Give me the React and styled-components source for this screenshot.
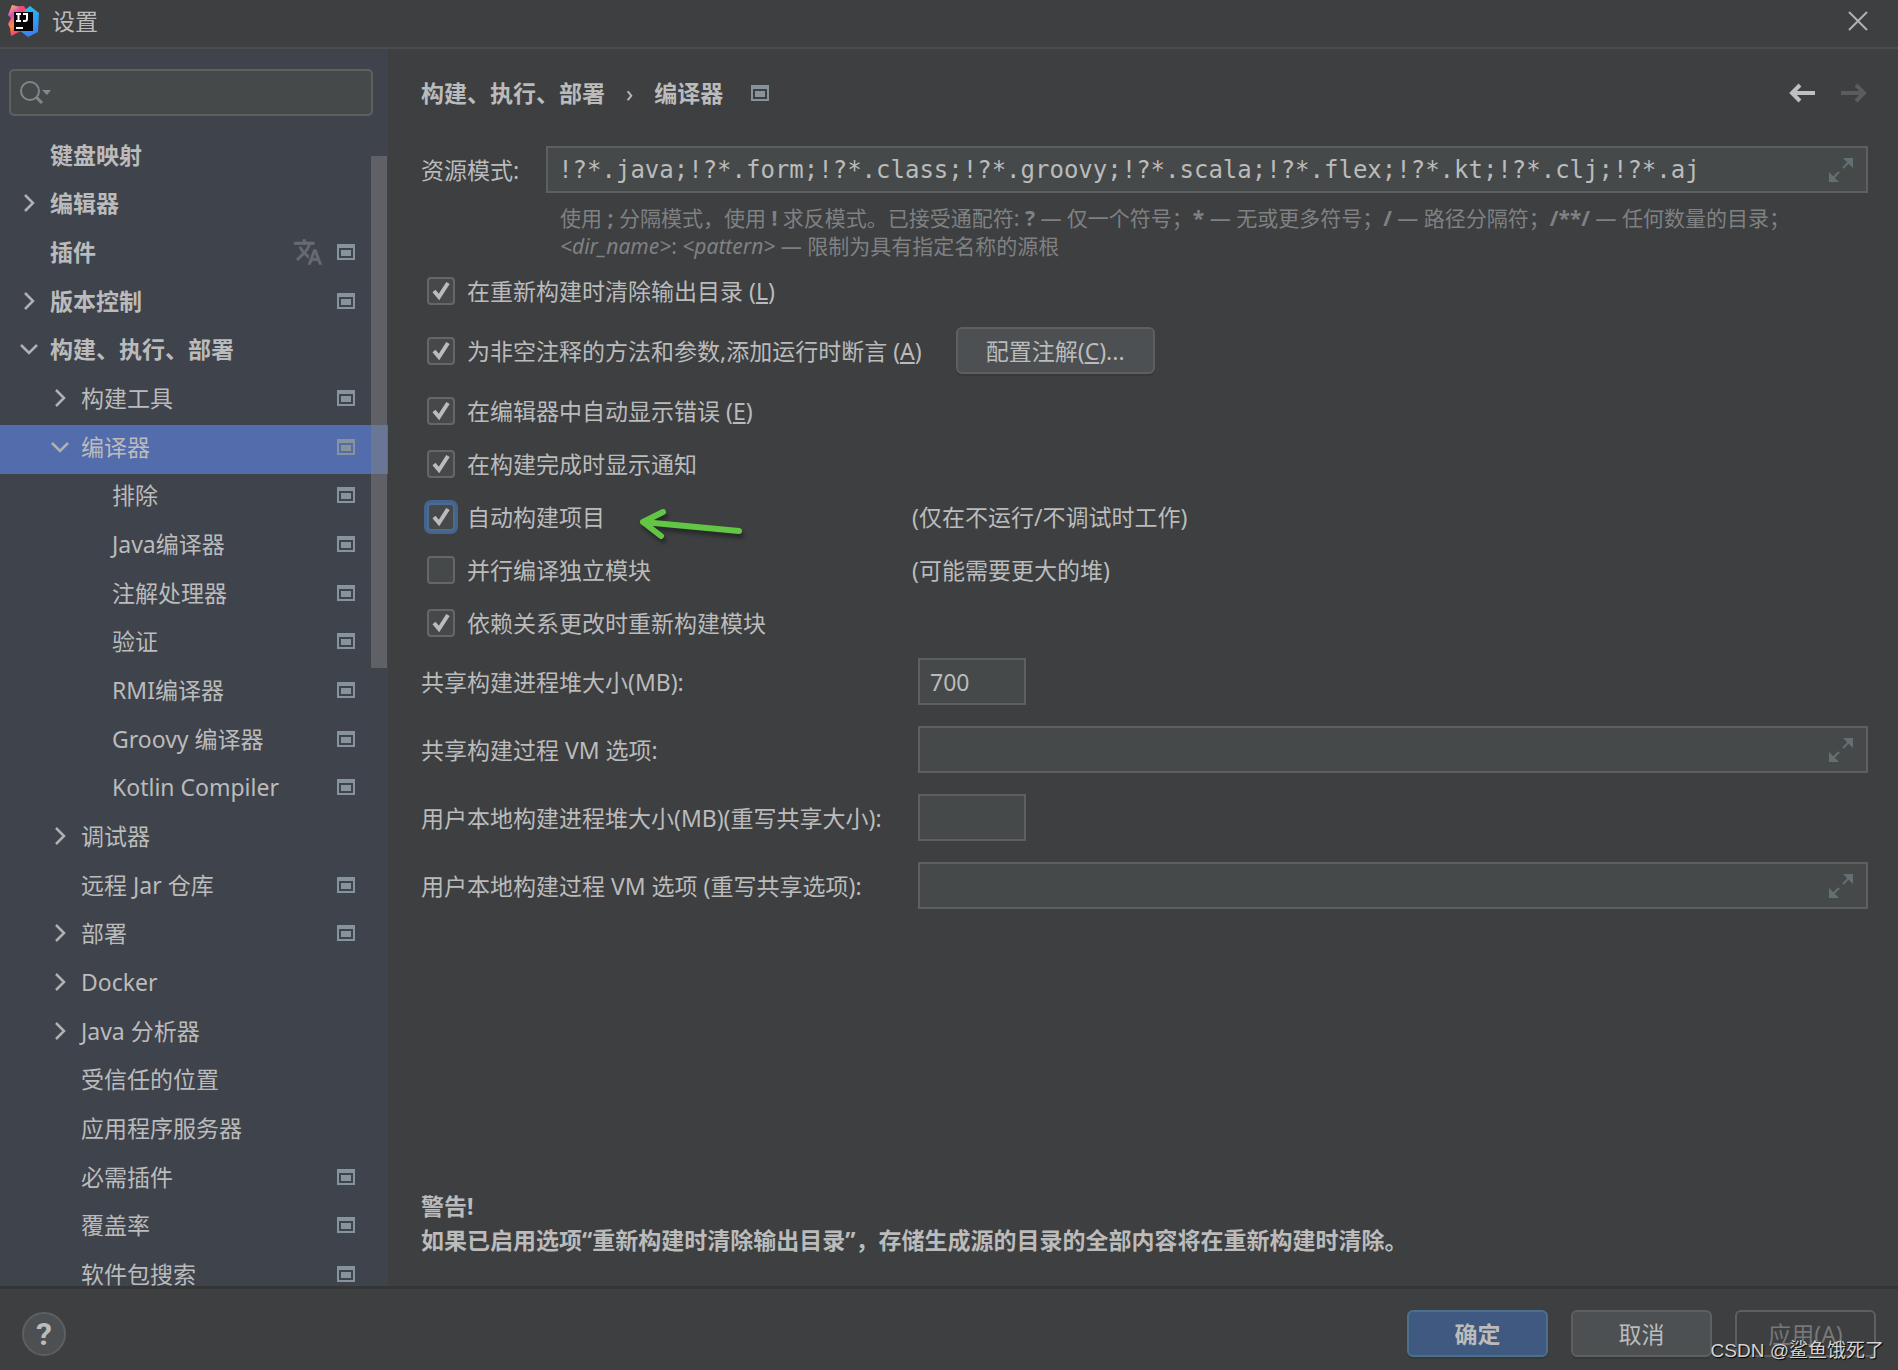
import React from "react";
import styled, { createGlobalStyle, css } from "styled-components";

const GlobalStyle = createGlobalStyle`
  * {
    box-sizing: border-box;
  }
  body {
    margin: 0;
    background: #3d3f41;
  }
  body, button, input {
    color: #bbbbbb;
    font-family: "Noto Sans", "Noto Sans CJK SC", sans-serif;
    font-size: 23px;
    line-height: 32px;
  }
`;

const Window = styled.div`
  display: flex;
  flex-direction: column;
  height: 100vh;
  overflow: hidden;
  background: #3d3f41;
`;

const TitleBar = styled.header`
  display: flex;
  flex: none;
  align-items: center;
  height: 49px;
  padding: 0 30px 6px 7px;
  border-bottom: 2px solid #4a4c4e;
`;

const WindowTitle = styled.h1`
  flex: 1;
  margin: 0 0 0 12px;
  font-size: 23px;
  font-weight: 400;
`;

const IconButton = styled.button`
  display: flex;
  padding: 0;
  border: 0;
  background: none;
`;

const Body = styled.div`
  display: flex;
  flex: 1;
  min-height: 0;
`;

const Sidebar = styled.aside`
  display: flex;
  flex: none;
  flex-direction: column;
  width: 388px;
  background: #3f434c;
`;

const SearchBox = styled.label`
  display: flex;
  flex: none;
  align-items: center;
  height: 47px;
  margin: 20px 15px 17px 9px;
  padding-left: 8px;
  border: 2px solid #5e6060;
  border-radius: 5px;
  background: #454949;
`;

const SearchInput = styled.input`
  flex: 1;
  min-width: 0;
  border: 0;
  outline: 0;
  background: none;
`;

const TreeArea = styled.nav`
  position: relative;
  flex: 1;
  min-height: 0;
  overflow: hidden;
`;

const TreeList = styled.ul`
  display: grid;
  grid-auto-rows: 1fr;
  height: 1168px;
  margin: 0;
  padding: 0;
  list-style: none;
`;

const TreeRow = styled.li`
  display: flex;
  align-items: center;
  padding: 0 33px 5px ${({ $level }) => 20 + $level * 31}px;
  font-weight: ${({ $level }) => ($level === 0 ? 700 : 400)};
  background: ${({ $selected }) => ($selected ? "#536cab" : "transparent")};
`;

const Arrow = styled.span`
  display: flex;
  width: 30px;
`;

const TreeLabel = styled.span`
  flex: 1;
  white-space: nowrap;
`;

const RowIcons = styled.span`
  display: flex;
  align-items: center;
  gap: 14px;
`;

// floats over the tree, so the selected row shows through it
const ScrollThumb = styled.div`
  position: absolute;
  top: 23px;
  right: 1px;
  width: 16px;
  height: 512px;
  background: rgba(128, 128, 128, 0.5);
`;

const Content = styled.main`
  display: flex;
  flex: 1;
  flex-direction: column;
  min-width: 0;
  padding: 27px 30px 29px 33px;
`;

const Crumbs = styled.div`
  display: flex;
  align-items: center;
  height: 34px;
  font-weight: 700;
`;

const CrumbSeparator = styled.span`
  margin: 0 21px;
  font-weight: 400;
`;

const CrumbIcon = styled.span`
  display: flex;
  flex: 1;
  margin-left: 28px;
`;

const History = styled.div`
  display: flex;
  gap: 24px;
`;

const PatternRow = styled.div`
  display: flex;
  align-items: center;
  gap: 27px;
  margin-top: 36px;
`;

const Field = styled.div`
  display: flex;
  flex: ${({ $short }) => ($short ? "none" : 1)};
  align-items: center;
  width: ${({ $short }) => ($short ? "108px" : "auto")};
  height: 47px;
  padding: 0 12px 0 10px;
  border: 2px solid #5e6060;
  background: #454949;
`;

const FieldInput = styled.input`
  flex: 1;
  min-width: 0;
  padding: 0;
  border: 0;
  outline: 0;
  background: none;
  ${({ $mono }) => $mono && css`
    font-family: "DejaVu Sans Mono", monospace;
    font-size: 24px;
  `}
`;

const Hint = styled.p`
  margin: 11px 0 0 139px;
  color: #808182;
  font-size: 21px;
  line-height: 28px;
`;

const Options = styled.div`
  display: flex;
  flex-direction: column;
  margin-top: 4px;
`;

const OptionRow = styled.div`
  display: flex;
  align-items: center;
  height: ${({ $tall }) => ($tall ? "67px" : "53px")};
`;

const OptionMain = styled.div`
  display: flex;
  align-items: center;
  width: 491px;
`;

const CheckLabel = styled.label`
  display: flex;
  align-items: center;
  gap: 12px;
  padding-left: 6px;
`;

const Checkbox = styled.input`
  width: 28px;
  height: 28px;
  margin: 0;
  appearance: none;
  border: 2px solid #646768;
  border-radius: 4px;
  background: #454949;
  ${({ $focused }) => $focused && css`
    border-color: #4c6a92;
    box-shadow: 0 0 0 3px #45638f;
  `}
  &:checked {
    background: #454949 url("data:image/svg+xml,%3Csvg xmlns='http://www.w3.org/2000/svg' viewBox='0 0 24 24'%3E%3Cpath d='M5 12l5 6L19 4' fill='none' stroke='%23bbbbbb' stroke-width='4'/%3E%3C/svg%3E") center / 24px no-repeat;
  }
`;

const Button = styled.button`
  height: 47px;
  min-width: 141px;
  padding: 0 26px;
  border: 2px solid ${({ $primary }) => ($primary ? "#4c708c" : "#5e6060")};
  border-radius: 6px;
  background: ${({ $primary }) => ($primary ? "#3f5980" : "#4c5052")};
  box-shadow: 0 2px 1px rgba(0, 0, 0, 0.12);
  font-weight: ${({ $primary }) => ($primary ? 700 : 400)};
  &:disabled {
    background: none;
    box-shadow: none;
    color: #777777;
  }
`;

const ConfigureButton = styled(Button)`
  min-width: 199px;
  margin-left: 34px;
`;

const GreenArrow = styled.svg`
  margin: 14px 0 0 33px;
  filter: drop-shadow(2px 4px 2px rgba(0, 0, 0, 0.4));
`;

const Form = styled.div`
  display: grid;
  grid-template-columns: 472px 1fr;
  gap: 21px 25px;
  align-items: center;
  margin-top: 9px;
`;

const Warning = styled.p`
  margin: auto 0 0;
  font-weight: 700;
  line-height: 34px;
`;

const Footer = styled.footer`
  position: relative;
  display: flex;
  flex: none;
  align-items: center;
  gap: 23px;
  height: 84px;
  padding: 8px 22px 0;
  border-top: 3px solid #333536;
`;

const HelpButton = styled.button`
  width: 44px;
  height: 44px;
  margin-right: auto;
  padding: 0;
  border: 2px solid #5e6060;
  border-radius: 50%;
  background: #4c5052;
  font-family: Roboto, sans-serif;
  font-size: 32px;
  font-weight: 700;
`;

const Watermark = styled.span`
  position: absolute;
  right: 14px;
  bottom: 3px;
  color: #d4d4d4;
  font-family: "Liberation Sans", "Noto Sans CJK SC", sans-serif;
  font-size: 19px;
  text-shadow: 1px 1px 1px #000000;
`;

const Logo = () => (
  <svg width="33" height="33" viewBox="0 0 33 33">
    <defs>
      <linearGradient id="warm" x1="0" y1="0" x2="0.4" y2="1">
        <stop offset="0" stopColor="#ffd84a" />
        <stop offset="0.35" stopColor="#d848c0" />
        <stop offset="0.65" stopColor="#ff8a3a" />
        <stop offset="1" stopColor="#ff2d7a" />
      </linearGradient>
      <linearGradient id="cool" x1="0" y1="0" x2="0.3" y2="1">
        <stop offset="0" stopColor="#20c8f0" />
        <stop offset="1" stopColor="#3a82f4" />
      </linearGradient>
    </defs>
    <path d="M5 1L14 3 20 12 16 26 4 32 3 24 1 20 4 14 1 11z" fill="url(#warm)" />
    <path d="M12 2L17 2 21 9 12 10z" fill="#f5476e" />
    <path d="M18 6L23 2 32 9 31 28 21 33 12 26z" fill="url(#cool)" />
    <path d="M7 8H26V27H7z" fill="#080508" />
    <path d="M9 10h5M11.500 10v7M9 17h5M16 10h4v5q0 2-2 2h-2M9 24h7" fill="none" stroke="#ffffff" strokeWidth="2" />
  </svg>
);

const ProjectIcon = () => (
  <svg width="18" height="16" viewBox="0 0 18 16">
    <path d="M0 0H18V16H0zM2 4V14H16V4z" fill="#87939a" fillRule="evenodd" />
    <path d="M4 6H14V12H4z" fill="#87939a" />
  </svg>
);

const TranslateIcon = () => (
  <svg width="30" height="30" viewBox="0 0 24 24" fill="#666a71" stroke="#666a71" strokeWidth="0.5">
    <path d="M12.870 15.070l-2.540-2.510.030-.030A17.520 17.520 0 0014.070 6H17V4h-7V2H8v2H1v2h11.170C11.500 7.920 10.440 9.750 9 11.350 8.070 10.320 7.300 9.190 6.690 8h-2c.730 1.630 1.730 3.170 2.980 4.560l-5.090 5.020L4 19l5-5 3.110 3.110.760-2.040zM18.500 10h-2L12 22h2l1.120-3h4.750L21 22h2l-4.500-12zm-2.620 7l1.620-4.330L19.120 17h-3.240z" />
  </svg>
);

const Chevron = ({ open }) => (
  <svg width="18" height="18" viewBox="0 0 18 18" fill="none" stroke="#afb1b3" strokeWidth="2.500">
    <path d={open ? "M1 5l8 8 8-8" : "M5 1l8 8-8 8"} />
  </svg>
);

const SearchIcon = () => (
  <svg width="34" height="26" viewBox="0 0 34 26" fill="none" stroke="#7f868c" strokeWidth="2">
    <circle cx="11" cy="11" r="9" />
    <path d="M17 17l6 6" strokeWidth="3" />
    <path d="M23 10h9l-4 5z" fill="#7f8b91" stroke="none" />
  </svg>
);

const CloseIcon = () => (
  <svg width="20" height="20" viewBox="0 0 20 20" stroke="#afb1b3" strokeWidth="2">
    <path d="M1 1l18 18M19 1L1 19" />
  </svg>
);

const HistoryArrow = ({ forward }) => (
  <svg width="28" height="20" viewBox="0 0 28 20" fill="none" stroke={forward ? "#5a5c5d" : "#bfbfbf"} strokeWidth="4">
    <path d={forward ? "M1 10h23M16 2l8 8-8 8" : "M27 10H4M12 2l-8 8 8 8"} />
  </svg>
);

const ExpandIcon = () => (
  <svg width="26" height="26" viewBox="0 0 26 26" fill="#646f74">
    <path d="M15 1h10v10zM1 15v10h10z" />
    <path d="M21 5l-6 6M5 21l6-6" stroke="#646f74" strokeWidth="2" />
  </svg>
);

const tree = [
  { label: "键盘映射", level: 0 },
  { label: "编辑器", level: 0, arrow: "closed" },
  { label: "插件", level: 0, translate: true, project: true },
  { label: "版本控制", level: 0, arrow: "closed", project: true },
  { label: "构建、执行、部署", level: 0, arrow: "open" },
  { label: "构建工具", level: 1, arrow: "closed", project: true },
  { label: "编译器", level: 1, arrow: "open", project: true, selected: true },
  { label: "排除", level: 2, project: true },
  { label: "Java编译器", level: 2, project: true },
  { label: "注解处理器", level: 2, project: true },
  { label: "验证", level: 2, project: true },
  { label: "RMI编译器", level: 2, project: true },
  { label: "Groovy 编译器", level: 2, project: true },
  { label: "Kotlin Compiler", level: 2, project: true },
  { label: "调试器", level: 1, arrow: "closed" },
  { label: "远程 Jar 仓库", level: 1, project: true },
  { label: "部署", level: 1, arrow: "closed", project: true },
  { label: "Docker", level: 1, arrow: "closed" },
  { label: "Java 分析器", level: 1, arrow: "closed" },
  { label: "受信任的位置", level: 1 },
  { label: "应用程序服务器", level: 1 },
  { label: "必需插件", level: 1, project: true },
  { label: "覆盖率", level: 1, project: true },
  { label: "软件包搜索", level: 1, project: true },
];

const buildFields = [
  { id: "shared-heap", label: "共享构建进程堆大小(MB):", value: "700", short: true },
  { id: "shared-vm", label: "共享构建过程 VM 选项:", value: "" },
  { id: "user-heap", label: "用户本地构建进程堆大小(MB)(重写共享大小):", value: "", short: true },
  { id: "user-vm", label: "用户本地构建过程 VM 选项 (重写共享选项):", value: "" },
];

export default () => (
  <Window>
    <GlobalStyle />
    <TitleBar>
      <Logo />
      <WindowTitle>设置</WindowTitle>
      <IconButton aria-label="关闭"><CloseIcon /></IconButton>
    </TitleBar>
    <Body>
      <Sidebar>
        <SearchBox>
          <SearchIcon />
          <SearchInput aria-label="搜索" />
        </SearchBox>
        <TreeArea>
          <TreeList>
            {tree.map((item) => (
              <TreeRow key={item.label} $level={item.level} $selected={item.selected}>
                <Arrow>{item.arrow && <Chevron open={item.arrow === "open"} />}</Arrow>
                <TreeLabel>{item.label}</TreeLabel>
                <RowIcons>
                  {item.translate && <TranslateIcon />}
                  {item.project && <ProjectIcon />}
                </RowIcons>
              </TreeRow>
            ))}
          </TreeList>
          <ScrollThumb />
        </TreeArea>
      </Sidebar>
      <Content>
        <Crumbs>
          <span>构建、执行、部署</span>
          <CrumbSeparator>›</CrumbSeparator>
          <span>编译器</span>
          <CrumbIcon><ProjectIcon /></CrumbIcon>
          <History>
            <IconButton aria-label="后退"><HistoryArrow /></IconButton>
            <IconButton aria-label="前进" disabled><HistoryArrow forward /></IconButton>
          </History>
        </Crumbs>
        <PatternRow>
          <label htmlFor="patterns">资源模式:</label>
          <Field>
            <FieldInput
              id="patterns"
              $mono
              defaultValue="!?*.java;!?*.form;!?*.class;!?*.groovy;!?*.scala;!?*.flex;!?*.kt;!?*.clj;!?*.aj"
            />
            <ExpandIcon />
          </Field>
        </PatternRow>
        <Hint>
          使用 <b>;</b> 分隔模式，使用 <b>!</b> 求反模式。已接受通配符: <b>?</b> — 仅一个符号；<b>*</b> — 无或更多符号；<b>/</b> — 路径分隔符；<b>/**/</b> — 任何数量的目录；
          <br />
          <i>&lt;dir_name&gt;</i>: <i>&lt;pattern&gt;</i> — 限制为具有指定名称的源根
        </Hint>
        <Options>
          <OptionRow>
            <CheckLabel>
              <Checkbox type="checkbox" defaultChecked />
              <span>在重新构建时清除输出目录 (<u>L</u>)</span>
            </CheckLabel>
          </OptionRow>
          <OptionRow $tall>
            <CheckLabel>
              <Checkbox type="checkbox" defaultChecked />
              <span>为非空注释的方法和参数,添加运行时断言 (<u>A</u>)</span>
            </CheckLabel>
            <ConfigureButton>配置注解(<u>C</u>)...</ConfigureButton>
          </OptionRow>
          <OptionRow>
            <CheckLabel>
              <Checkbox type="checkbox" defaultChecked />
              <span>在编辑器中自动显示错误 (<u>E</u>)</span>
            </CheckLabel>
          </OptionRow>
          <OptionRow>
            <CheckLabel>
              <Checkbox type="checkbox" defaultChecked />
              <span>在构建完成时显示通知</span>
            </CheckLabel>
          </OptionRow>
          <OptionRow>
            <OptionMain>
              <CheckLabel>
                <Checkbox type="checkbox" defaultChecked $focused />
                <span>自动构建项目</span>
              </CheckLabel>
              <GreenArrow width="106" height="32" viewBox="0 0 106 32" fill="none" stroke="#62c544" strokeWidth="6" strokeLinecap="round" strokeLinejoin="round">
                <path d="M101 23L5 14M25 4L5 14 23 28" />
              </GreenArrow>
            </OptionMain>
            <span>(仅在不运行/不调试时工作)</span>
          </OptionRow>
          <OptionRow>
            <OptionMain>
              <CheckLabel>
                <Checkbox type="checkbox" />
                <span>并行编译独立模块</span>
              </CheckLabel>
            </OptionMain>
            <span>(可能需要更大的堆)</span>
          </OptionRow>
          <OptionRow>
            <CheckLabel>
              <Checkbox type="checkbox" defaultChecked />
              <span>依赖关系更改时重新构建模块</span>
            </CheckLabel>
          </OptionRow>
        </Options>
        <Form>
          {buildFields.map((field) => (
            <React.Fragment key={field.id}>
              <label htmlFor={field.id}>{field.label}</label>
              <Field $short={field.short}>
                <FieldInput id={field.id} defaultValue={field.value} />
                {!field.short && <ExpandIcon />}
              </Field>
            </React.Fragment>
          ))}
        </Form>
        <Warning>
          警告!
          <br />
          如果已启用选项“重新构建时清除输出目录”，存储生成源的目录的全部内容将在重新构建时清除。
        </Warning>
      </Content>
    </Body>
    <Footer>
      <HelpButton aria-label="帮助">?</HelpButton>
      <Button $primary>确定</Button>
      <Button>取消</Button>
      <Button disabled>应用(A)</Button>
      <Watermark>CSDN @鲨鱼饿死了</Watermark>
    </Footer>
  </Window>
);
